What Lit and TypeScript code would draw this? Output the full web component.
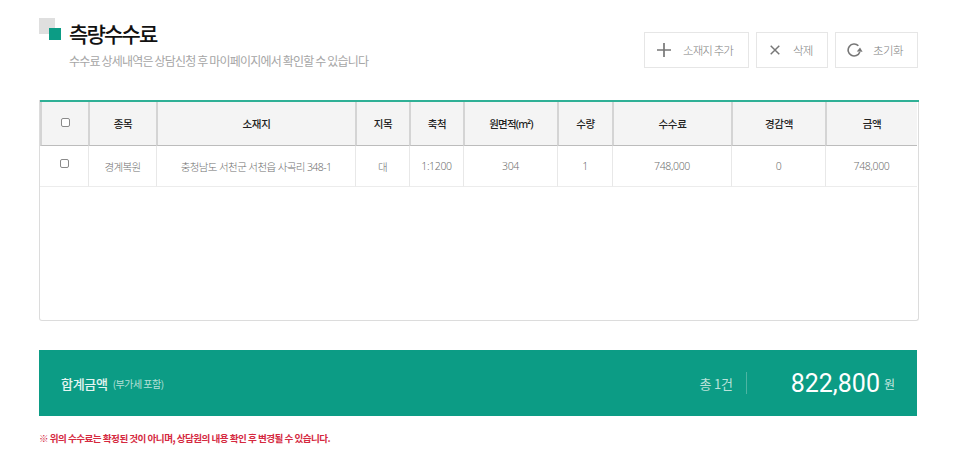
import { LitElement, html, css, svg } from "lit";
import { customElement } from "lit/decorators.js";

const heads = ["종목", "소재지", "지목", "축척", "원면적(m²)", "수량", "수수료", "경감액", "금액"];
const row = ["경계복원", "충청남도 서천군 서천읍 사곡리 348-1", "대", "1:1200", "304", "1", "748,000", "0", "748,000"];

const plus = svg`<path d="M7 0V14M0 7H14" stroke="#777" stroke-width="1.7" fill="none"/>`;
const cross = svg`<path d="M2 2L12 12M12 2L2 12" stroke="#777" stroke-width="1.7" fill="none"/>`;
const reset = svg`<path d="M11.4 2.8A6 6 0 1 0 12.8 9" stroke="#777" stroke-width="1.6" fill="none"/><path d="M9.8 8.4L13 4.6L15.6 8.8Z" fill="#777"/>`;

@customElement("app-root")
export class AppRoot extends LitElement {
  static styles = css`
    :host {
      display: block;
      width: 966px;
      height: 463px;
      box-sizing: border-box;
      padding: 18px 47px 0 39px;
      background: #fff;
      font-family: "Noto Sans CJK KR", "Noto Sans", sans-serif;
      overflow: hidden;
    }
    .top {
      display: flex;
      justify-content: space-between;
      height: 82px;
    }
    .heading {
      position: relative;
      padding: 1px 0 0 30px;
    }
    .mark-back {
      position: absolute;
      left: 0;
      top: 0;
      width: 16px;
      height: 16px;
      background: #dfdfdf;
    }
    .mark-front {
      position: absolute;
      left: 10px;
      top: 10px;
      width: 12px;
      height: 12px;
      background: #0c9c85;
    }
    h1 {
      margin: 0;
      font-size: 21px;
      line-height: 28px;
      font-weight: 500;
      letter-spacing: -1.8px;
      color: #111;
    }
    .sub {
      margin: 5px 0 0;
      font-size: 12px;
      line-height: 18px;
      letter-spacing: -0.82px;
      color: #a6a6a6;
    }
    .actions {
      display: flex;
      gap: 7px;
      padding-top: 14px;
      margin-right: 1px;
    }
    .btn {
      display: flex;
      align-items: center;
      box-sizing: border-box;
      height: 36px;
      border: 1px solid #e6e6e6;
      background: #fff;
      padding: 0;
      font: inherit;
      font-size: 11.5px;
      font-weight: 300;
      letter-spacing: -0.9px;
      color: #808080;
    }
    .btn svg { display: block; flex: none; }
    .b1 { width: 105px; padding-left: 12px; gap: 12px; }
    .b2 { width: 72px; padding-left: 12px; gap: 12px; }
    .b3 { width: 83px; padding-left: 11px; gap: 10px; letter-spacing: -0.6px; }
    .card {
      box-sizing: border-box;
      width: 880px;
      height: 221px;
      border: 1px solid #dcdcdc;
      border-top: 0;
      border-radius: 0 0 3px 3px;
      position: relative;
    }
    .card::before {
      content: "";
      position: absolute;
      left: 0;
      right: -1px;
      top: 0;
      height: 2px;
      background: #2fb096;
    }
    .grid {
      display: grid;
      grid-template-columns: 48px 68px 199px 54px 54px 94px 55px 119px 94px 92px;
      padding-top: 2px;
    }
    .h, .c {
      display: flex;
      align-items: center;
      justify-content: center;
      box-sizing: border-box;
      font-family: "Noto Sans", "Noto Sans CJK KR", sans-serif;
      font-size: 10.5px;
      letter-spacing: -0.4px;
    }
    .h {
      height: 44px;
      background: #f4f4f4;
      border-bottom: 1px solid #bcbcbc;
      border-left: 2px solid #d4d4d4;
      color: #222;
      font-weight: 500;
    }
    .h.tight { letter-spacing: -0.8px; }
    .h.first { border-left: 2px solid #d4d4d4; }
    .c {
      height: 41px;
      border-bottom: 1px solid #ececec;
      border-left: 1px solid #e8e8e8;
      color: #707070;
      font-weight: 300;
      letter-spacing: -0.6px;
    }
    .c.first { border-left: 0; }
    .c.num { letter-spacing: -0.35px; }
    .box {
      box-sizing: border-box;
      width: 9px;
      height: 9px;
      border: 1px solid #8a8a8a;
      border-radius: 2px;
      background: #fff;
      margin-bottom: 2px;
    }
    .c .box { margin-bottom: 5px; }
    .total {
      display: flex;
      align-items: center;
      box-sizing: border-box;
      width: 878px;
      height: 66px;
      margin-top: 29px;
      padding: 0 22px 0 22px;
      background: #0c9c85;
      color: #fff;
    }
    .t-label {
      font-size: 13px;
      font-weight: 500;
      letter-spacing: -0.3px;
      color: #e6f5f2;
    }
    .t-vat {
      margin-left: 5px;
      font-size: 10px;
      letter-spacing: -0.5px;
      color: #b5e0d8;
    }
    .t-count {
      margin-left: auto;
      font-size: 13px;
      letter-spacing: -0.2px;
      color: #b9e2da;
    }
    .t-div {
      width: 1px;
      height: 22px;
      margin: 0 44px 0 13px;
      background: #4db5a3;
    }
    .t-amount {
      font-family: Roboto, sans-serif;
      font-size: 25px;
      color: #fff;
    }
    .t-unit {
      margin-left: 4px;
      font-size: 12px;
      color: #c5e7e0;
    }
    .note {
      margin: 14px 0 0;
      font-size: 9.6px;
      line-height: 16px;
      font-weight: 700;
      letter-spacing: -0.53px;
      color: #d5293f;
    }
  `;

  render() {
    return html`
      <div class="top">
        <div class="heading">
          <span class="mark-back"></span><span class="mark-front"></span>
          <h1>측량수수료</h1>
          <p class="sub">수수료 상세내역은 상담신청 후 마이페이지에서 확인할 수 있습니다</p>
        </div>
        <div class="actions">
          <button class="btn b1"><svg width="14" height="14" viewBox="0 0 14 14">${plus}</svg>소재지 추가</button>
          <button class="btn b2"><svg width="12" height="12" viewBox="0 0 14 14">${cross}</svg>삭제</button>
          <button class="btn b3"><svg width="16" height="14" viewBox="0 0 16 14">${reset}</svg>초기화</button>
        </div>
      </div>
      <div class="card">
        <div class="grid">
          <div class="h first"><span class="box"></span></div>
          ${heads.map((t) => html`<div class="h ${t.includes("(") ? "tight" : ""}">${t}</div>`)}
          <div class="c first"><span class="box"></span></div>
          ${row.map((t) => html`<div class="c ${/^[\d:,]+$/.test(t) ? "num" : ""}">${t}</div>`)}
        </div>
      </div>
      <div class="total">
        <span class="t-label">합계금액</span>
        <span class="t-vat">(부가세 포함)</span>
        <span class="t-count">총 1건</span>
        <span class="t-div"></span>
        <span class="t-amount">822,800</span>
        <span class="t-unit">원</span>
      </div>
      <p class="note">※ 위의 수수료는 확정된 것이 아니며, 상담원의 내용 확인 후 변경될 수 있습니다.</p>
    `;
  }
}
